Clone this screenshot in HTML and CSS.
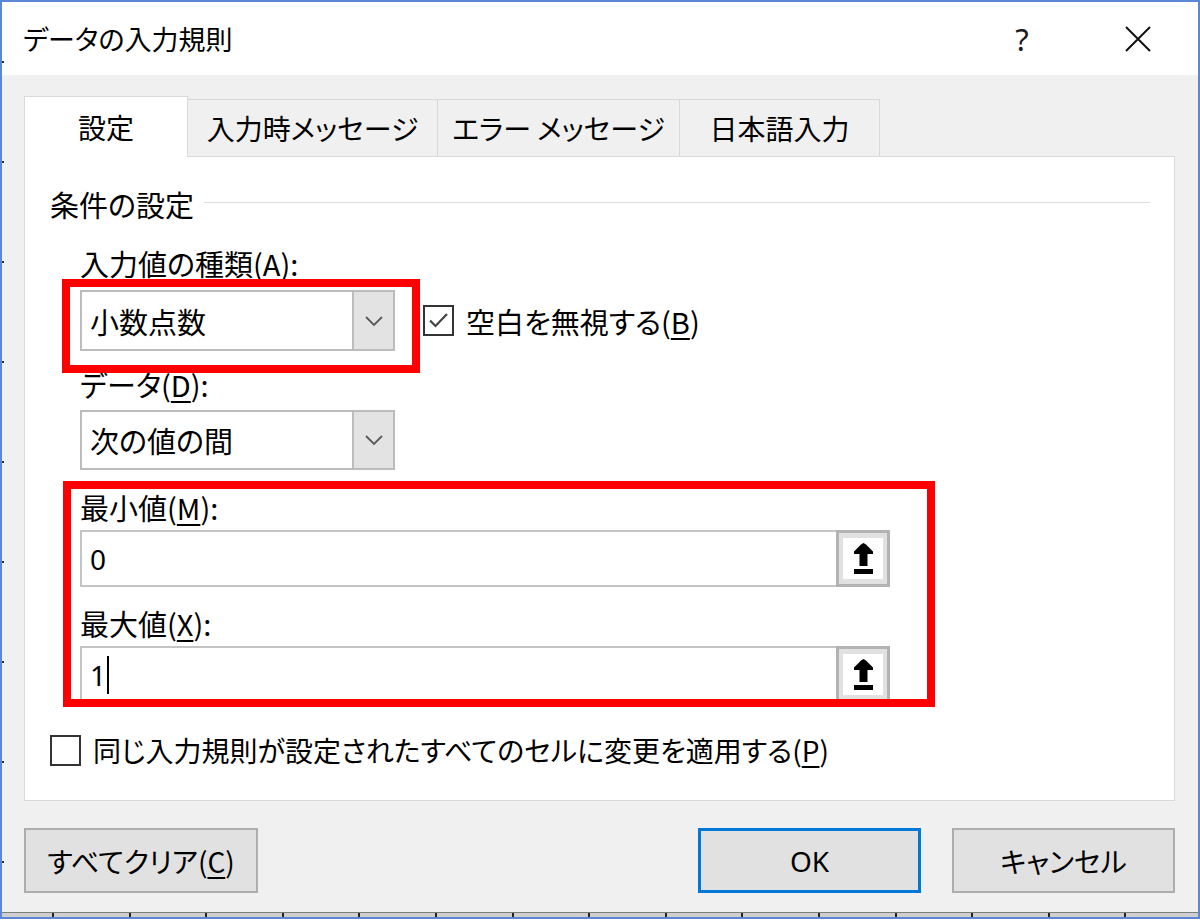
FILE: index.html
```html
<!DOCTYPE html>
<html lang="ja">
<head>
<meta charset="utf-8">
<title>データの入力規則</title>
<link rel="stylesheet" href="styles.css">
</head>
<body>
<div class="window">
  <div class="titlebar">
    <div class="title">データの入力規則</div>
    <div class="help">?</div>
    <div class="close">
      <svg width="26" height="26" viewBox="0 0 26 26"><path d="M1 1 L25 25 M25 1 L1 25" stroke="#111" stroke-width="2" fill="none"/></svg>
    </div>
  </div>
  <div class="client">
    <div class="tabs">
      <div class="tab active">設定</div>
      <div class="tab tab2">入力時メッセージ</div>
      <div class="tab tab3">エラー メッセージ</div>
      <div class="tab tab4">日本語入力</div>
    </div>
    <div class="panel">
      <div class="group-head"><span class="group-title">条件の設定</span><span class="rule"></span></div>
      <div class="fields">
        <div class="label l-allow">入力値の種類(<u>A</u>):</div>
        <div class="combo-row">
          <div class="combo">
            <span class="combo-text">小数点数</span>
            <span class="combo-btn"><svg width="20" height="12" viewBox="0 0 20 12"><path d="M2 2 L10 10 L18 2" stroke="#5a5a5a" stroke-width="1.8" fill="none"/></svg></span>
          </div>
          <div class="check check-ignore">
            <span class="box"><svg width="27" height="27" viewBox="0 0 27 27"><path d="M5 13.5 L10.5 19 L22 7" stroke="#444" stroke-width="2.2" fill="none"/></svg></span>
            <span class="check-label">空白を無視する(<u>B</u>)</span>
          </div>
        </div>
        <div class="label l-data">データ(<u>D</u>):</div>
        <div class="combo">
          <span class="combo-text">次の値の間</span>
          <span class="combo-btn"><svg width="20" height="12" viewBox="0 0 20 12"><path d="M2 2 L10 10 L18 2" stroke="#5a5a5a" stroke-width="1.8" fill="none"/></svg></span>
        </div>
        <div class="label l-min">最小値(<u>M</u>):</div>
        <div class="refedit">
          <span class="ref-text">0</span>
          <span class="ref-btn"><span class="ref-inner"><svg width="19" height="31" viewBox="0 0 19 31"><path d="M9.5 0 L12 1.5 L19 8.5 L19 11 L13.5 11 L13.5 23 L5.5 23 L5.5 11 L0 11 L0 8.5 L7 1.5 Z" fill="#000"/><rect x="0" y="26" width="19" height="5" fill="#000"/></svg></span></span>
        </div>
        <div class="label l-max">最大値(<u>X</u>):</div>
        <div class="refedit">
          <span class="ref-text">1<span class="caret"></span></span>
          <span class="ref-btn"><span class="ref-inner"><svg width="19" height="31" viewBox="0 0 19 31"><path d="M9.5 0 L12 1.5 L19 8.5 L19 11 L13.5 11 L13.5 23 L5.5 23 L5.5 11 L0 11 L0 8.5 L7 1.5 Z" fill="#000"/><rect x="0" y="26" width="19" height="5" fill="#000"/></svg></span></span>
        </div>
      </div>
      <div class="check apply-row">
        <span class="box"></span>
        <span class="check-label">同じ入力規則が設定されたすべてのセルに変更を適用する(<u>P</u>)</span>
      </div>
    </div>
    <div class="buttons">
      <div class="btn btn-clear">すべてクリア(<u>C</u>)</div>
      <div class="btn btn-ok">OK</div>
      <div class="btn btn-cancel">キャンセル</div>
    </div>
  </div>
  <div class="frame-bottom"></div>
  <div class="hl hl-1"></div>
  <div class="hl hl-2"></div>
</div>
</body>
</html>
```

FILE: styles.css
```css
* { box-sizing: border-box; }
html, body { margin: 0; padding: 0; background: #ffffff; }
body {
  font-family: "Noto Sans CJK JP", "Noto Sans", sans-serif;
  font-feature-settings: "palt";
  color: #000;
}
u { text-decoration-thickness: 2px; text-underline-offset: 4px; }

.window {
  position: relative;
  width: 1200px;
  height: 919px;
  border: 2px solid #5b87d6;
  display: flex;
  flex-direction: column;
  background: #f0f0f0;
}
.window::before {
  content: "";
  position: absolute;
  left: 0; top: 0;
  width: 2px; height: 100%;
  background: repeating-linear-gradient(180deg, transparent 0 59px, #2a2a2a 59px 61px, transparent 61px 100px);
}

.titlebar {
  flex: none;
  height: 73px;
  background: #fff;
  display: flex;
  align-items: center;
  padding-left: 21px;
}
.title { flex: 1; font-size: 27px; }
.help { width: 40px; text-align: center; font-size: 31px; color: #1a1a1a; font-family: "Noto Sans", sans-serif; font-weight: 400; }
.close { width: 26px; height: 26px; margin-left: 83px; margin-right: 47px; display: flex; }

.client {
  flex: none;
  height: 837px;
  padding: 21px 23px 0 22px;
  display: flex;
  flex-direction: column;
}

.tabs {
  flex: none;
  height: 60px;
  display: flex;
  align-items: flex-end;
  position: relative;
  z-index: 1;
}
.tab {
  height: 57px;
  display: flex;
  align-items: center;
  justify-content: center;
  font-size: 28px;
  background: #f0f0f0;
  border: 1px solid #d9d9d9;
  border-left: none;
  border-bottom: none;
}
.tab.active {
  width: 164px;
  height: 61px;
  margin-bottom: -1px;
  background: #fff;
  border-left: 1px solid #d9d9d9;
}
.tab2 { width: 250px; }
.tab3 { width: 242px; }
.tab4 { width: 200px; }

.panel {
  flex: none;
  height: 645px;
  background: #fff;
  border: 1px solid #d9d9d9;
  padding: 27px 0 0 25px;
}

.group-head { display: flex; align-items: center; height: 40px; }
.group-title { font-size: 29px; }
.rule { flex: 1; height: 1px; background: #dcdcdc; margin: 0 24px 4px 10px; }

.fields { margin-left: 30px; }
.label { height: 40px; line-height: 40px; font-size: 29px; }
.l-allow { margin-top: 19px; }
.l-data { margin-top: 12px; height: 42px; line-height: 42px; }
.l-min { margin-top: 17px; }
.l-max { margin-top: 16px; }

.combo-row { display: flex; align-items: center; margin-top: 7px; }
.combo {
  width: 315px;
  height: 61px;
  display: flex;
  background: #fff;
  border: 2px solid #bcbcbc;
}
.l-data + .combo { margin-top: 5px; height: 60px; }
.combo-text { flex: 1; display: flex; align-items: center; padding-left: 8px; font-size: 29px; }
.combo-btn {
  width: 41px;
  background: #e3e3e3;
  border-left: 2px solid #bcbcbc;
  display: flex;
  align-items: center;
  justify-content: center;
}

.check { display: flex; align-items: center; }
.box {
  width: 31px; height: 31px;
  border: 2px solid #333;
  background: #fff;
  display: flex;
  align-items: center;
  justify-content: center;
  flex: none;
}
.check-label { font-size: 28px; }
.check-ignore { margin-left: 28px; }
.check-ignore .check-label { margin-left: 12px; font-size: 29px; }

.refedit { width: 810px; height: 57px; display: flex; margin-top: 3px; }
.ref-text {
  flex: 1;
  display: flex;
  align-items: center;
  padding-left: 8px;
  font-size: 28px;
  font-family: "Noto Sans", sans-serif;
  border: 2px solid #c4c4c4;
  border-right: none;
}
.caret { display: inline-block; width: 2px; height: 38px; background: #000; margin-left: 1px; }
.ref-btn {
  width: 54px;
  background: #e1e1e1;
  border: 3px solid #b3b3b3;
  padding: 5px 4px;
  display: flex;
}
.ref-inner { flex: 1; background: #fff; display: flex; align-items: center; justify-content: center; }

.apply-row { margin-top: 27px; height: 40px; }
.apply-row .check-label { margin-left: 12px; }

.buttons { flex: none; display: flex; margin-top: 27px; height: 65px; }
.btn {
  height: 65px;
  background: #e1e1e1;
  border: 2px solid #adadad;
  font-size: 28px;
  display: flex;
  align-items: center;
  justify-content: center;
}
.btn-clear { width: 234px; }
.btn-ok { width: 223px; margin-left: auto; border: 3px solid #0078d7; font-family: "Noto Sans", sans-serif; }
.btn-cancel { width: 223px; margin-left: 31px; }

.frame-bottom {
  flex: 1;
  border-top: 1px solid #7d7d7d;
  background-color: #cfcfcf;
  background-image: repeating-linear-gradient(90deg, transparent 0 50px, #222 50px 52px, transparent 52px 76.6px);
}

.hl {
  position: absolute;
  border: 8px solid #ff0000;
  pointer-events: none;
}
.hl-1 { left: 60px; top: 277px; width: 358px; height: 94px; }
.hl-2 { left: 61px; top: 479px; width: 872px; height: 226px; }
```
